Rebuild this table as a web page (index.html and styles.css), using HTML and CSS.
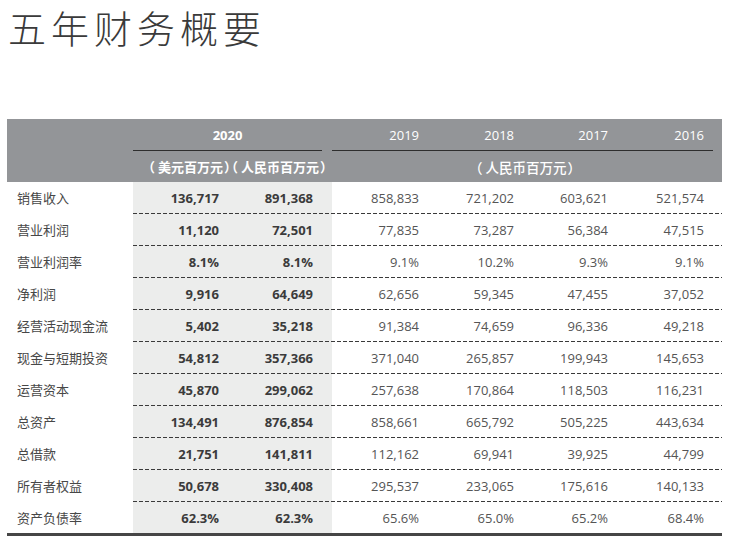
FILE: index.html
```html
<!DOCTYPE html>
<html lang="zh-CN">
<head>
<meta charset="utf-8">
<title>五年财务概要</title>
<link rel="stylesheet" href="styles.css">
</head>
<body>
<h1 class="title">五年财务概要</h1>
<div class="table">
  <div class="thead">
    <div class="hrow hrow-years">
      <div class="hcell"></div>
      <div class="hcell hcell-2020 ruled">2020</div>
      <div class="hcell"></div>
      <div class="hcell year ruled">2019</div>
      <div class="hcell year ruled">2018</div>
      <div class="hcell year ruled">2017</div>
      <div class="hcell year ruled">2016</div>
      <div class="hcell"></div>
    </div>
    <div class="hrow hrow-units">
      <div class="hcell"></div>
      <div class="hcell units-2020"><span class="po">（</span>美元百万元<span class="pc">）</span><span class="po">（</span>人民币百万元<span class="pc">）</span></div>
      <div class="hcell"></div>
      <div class="hcell units-rest"><span class="po">（</span>人民币百万元<span class="pc">）</span></div>
      <div class="hcell"></div>
    </div>
  </div>
  <div class="tbody">
    <div class="row"><div class="label">销售收入</div><div class="num hi">136,717</div><div class="num hi">891,368</div><div class="gap"></div><div class="num">858,833</div><div class="num">721,202</div><div class="num">603,621</div><div class="num">521,574</div><div class="end"></div></div>
    <div class="row"><div class="label">营业利润</div><div class="num hi">11,120</div><div class="num hi">72,501</div><div class="gap"></div><div class="num">77,835</div><div class="num">73,287</div><div class="num">56,384</div><div class="num">47,515</div><div class="end"></div></div>
    <div class="row"><div class="label">营业利润率</div><div class="num hi">8.1%</div><div class="num hi">8.1%</div><div class="gap"></div><div class="num">9.1%</div><div class="num">10.2%</div><div class="num">9.3%</div><div class="num">9.1%</div><div class="end"></div></div>
    <div class="row"><div class="label">净利润</div><div class="num hi">9,916</div><div class="num hi">64,649</div><div class="gap"></div><div class="num">62,656</div><div class="num">59,345</div><div class="num">47,455</div><div class="num">37,052</div><div class="end"></div></div>
    <div class="row"><div class="label">经营活动现金流</div><div class="num hi">5,402</div><div class="num hi">35,218</div><div class="gap"></div><div class="num">91,384</div><div class="num">74,659</div><div class="num">96,336</div><div class="num">49,218</div><div class="end"></div></div>
    <div class="row"><div class="label">现金与短期投资</div><div class="num hi">54,812</div><div class="num hi">357,366</div><div class="gap"></div><div class="num">371,040</div><div class="num">265,857</div><div class="num">199,943</div><div class="num">145,653</div><div class="end"></div></div>
    <div class="row"><div class="label">运营资本</div><div class="num hi">45,870</div><div class="num hi">299,062</div><div class="gap"></div><div class="num">257,638</div><div class="num">170,864</div><div class="num">118,503</div><div class="num">116,231</div><div class="end"></div></div>
    <div class="row"><div class="label">总资产</div><div class="num hi">134,491</div><div class="num hi">876,854</div><div class="gap"></div><div class="num">858,661</div><div class="num">665,792</div><div class="num">505,225</div><div class="num">443,634</div><div class="end"></div></div>
    <div class="row"><div class="label">总借款</div><div class="num hi">21,751</div><div class="num hi">141,811</div><div class="gap"></div><div class="num">112,162</div><div class="num">69,941</div><div class="num">39,925</div><div class="num">44,799</div><div class="end"></div></div>
    <div class="row"><div class="label">所有者权益</div><div class="num hi">50,678</div><div class="num hi">330,408</div><div class="gap"></div><div class="num">295,537</div><div class="num">233,065</div><div class="num">175,616</div><div class="num">140,133</div><div class="end"></div></div>
    <div class="row row-last"><div class="label">资产负债率</div><div class="num hi">62.3%</div><div class="num hi">62.3%</div><div class="gap"></div><div class="num">65.6%</div><div class="num">65.0%</div><div class="num">65.2%</div><div class="num">68.4%</div><div class="end"></div></div>
  </div>
</div>
</body>
</html>
```

FILE: styles.css
```css
html, body {
  margin: 0;
  padding: 0;
  background: #ffffff;
}

body {
  width: 734px;
  height: 548px;
  overflow: hidden;
  font-family: "Open Sans", "Noto Sans CJK SC", sans-serif;
}

.title {
  margin: 0;
  padding: 8px 0 0 8px;
  font-family: "Noto Sans CJK SC", sans-serif;
  font-weight: 300;
  font-size: 38px;
  line-height: 38px;
  letter-spacing: 5px;
  color: #3a3a3a;
}

.table {
  margin: 73px 0 0 7px;
  width: 715px;
  border-bottom: 3px solid #464646;
}

.thead {
  background: #939598;
  color: #ffffff;
}

.hrow {
  display: grid;
  grid-template-columns: 126px 95px 94px 10px 96px 95px 94px 96px 9px;
}

.hrow-years {
  height: 32px;
}

.hrow-units {
  height: 31px;
  grid-template-columns: 126px 189px 10px 381px 9px;
}

.hcell {
  display: flex;
  align-items: center;
  box-sizing: border-box;
  font-size: 13px;
}

.ruled {
  border-bottom: 1px solid #2e2e2e;
}

.hcell-2020 {
  grid-column: span 2;
  justify-content: center;
  font-weight: 700;
}

.year {
  justify-content: flex-end;
  padding-right: 9px;
}

.units-2020,
.units-rest {
  font-family: "Noto Sans CJK SC", sans-serif;
  font-weight: 700;
  font-size: 13px;
  justify-content: center;
  text-spacing-trim: space-all;
  font-feature-settings: "halt";
  white-space: nowrap;
}

.units-2020 {
  padding-left: 19px;
}

.units-rest {
  font-weight: 500;
  font-size: 13.5px;
  padding-left: 4px;
}

.po {
  margin: 0 3px 0 1px;
}

.pc {
  margin: 0 0 0 1px;
}

.row {
  display: grid;
  grid-template-columns: 126px 95px 94px 10px 96px 95px 94px 96px 9px;
  grid-template-rows: 31px 1px;
}

.row::after {
  content: "";
  grid-column: 2 / -1;
  grid-row: 2;
  background:
    repeating-linear-gradient(to right, #3a3a3a 0 4px, transparent 4px 6px),
    linear-gradient(to right, #ecedec 0 199px, transparent 199px);
}

.row-last {
  grid-template-rows: 31px;
}

.row-last::after {
  display: none;
}

.label {
  display: flex;
  align-items: center;
  padding-left: 10px;
  font-family: "Noto Sans CJK SC", sans-serif;
  font-size: 13px;
  color: #474747;
  white-space: nowrap;
}

.num {
  display: flex;
  align-items: center;
  justify-content: flex-end;
  padding-right: 9px;
  font-size: 13px;
  color: #555555;
}

.num.hi {
  background: #ecedec;
  font-weight: 700;
  color: #3b3b3b;
}

.gap {
  background: #ecedec;
}
```
